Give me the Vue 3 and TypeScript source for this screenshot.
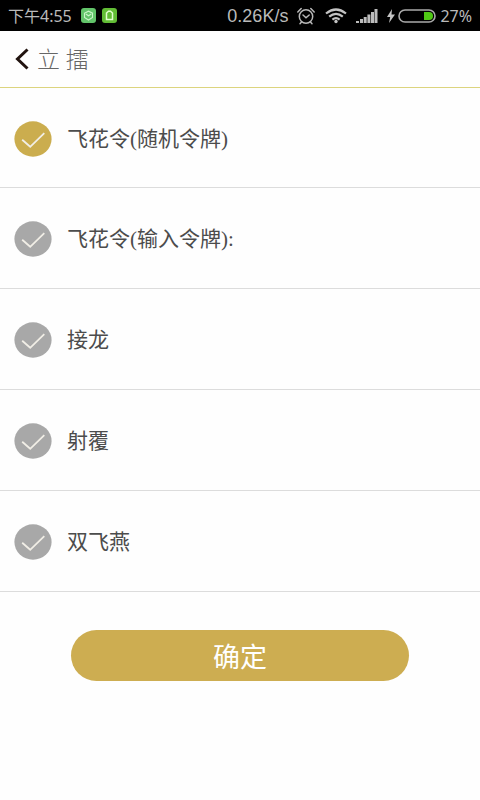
<script setup lang="ts">
import { ref } from 'vue'

interface Mode {
  id: string
  label: string
}

const modes: Mode[] = [
  { id: 'random', label: '飞花令(随机令牌)' },
  { id: 'custom', label: '飞花令(输入令牌):' },
  { id: 'chain', label: '接龙' },
  { id: 'riddle', label: '射覆' },
  { id: 'swallow', label: '双飞燕' },
]

const selected = ref<string>('random')
</script>

<template>
  <div class="screen">
    <div class="status">
      <div class="group">
        <span class="clock">下午4:55</span>
        <svg class="app" viewBox="0 0 15 15" width="15" height="15" aria-hidden="true">
          <rect width="15" height="15" rx="3" fill="#62c46a" />
          <path d="M3.5 5.2 7.5 3.2l4 2v4.2l-4 2.6-4-2.6zM4.8 6l2.7 1.8L10.2 6" fill="none" stroke="#c9f5c8" stroke-width="1.1" />
        </svg>
        <svg class="app" viewBox="0 0 15 15" width="15" height="15" aria-hidden="true">
          <rect width="15" height="15" rx="3" fill="#62bd35" />
          <path d="M4.5 11.5V5l2-1.8h2L10.500 5v6.500z" fill="none" stroke="#e2ffd0" stroke-width="1.5" />
        </svg>
      </div>
      <div class="group">
        <span class="speed">0.26K/s</span>
        <svg class="alarm" viewBox="0 0 20 18" width="20" height="18" fill="none" stroke="#b8b8b8" stroke-width="1.5" stroke-linecap="round" aria-hidden="true">
          <circle cx="10" cy="9.500" r="6.700" />
          <path d="M1.800 5 5.200 1.500M18.200 5l-3.400-3.500M7 8l3 2.700L13.200 8M5.500 15l-1.500 1.700M14.500 15l1.500 1.700" />
        </svg>
        <svg class="wifi" viewBox="0 0 22 16" width="22" height="16" fill="none" stroke="#c4c4c4" stroke-width="2.200" aria-hidden="true">
          <path d="M1 5.500Q11-2.500 21 5.500M4.200 8.700Q11 3 17.800 8.700M7.400 11.700Q11 8.700 14.600 11.700" />
          <circle cx="11" cy="13.500" r="1.700" fill="#c4c4c4" stroke="none" />
        </svg>
        <svg class="signal" viewBox="0 0 22 14" width="22" height="14" fill="#bcbcbc" aria-hidden="true">
          <path d="M0 12h3v2H0zM4 10h3v4H4zM7.700 8h3v6h-3zM11.400 5.500h3V14h-3zM15 3h3v11h-3zM18.500 0h3v14h-3z" />
        </svg>
        <svg class="bolt" viewBox="0 0 8 14" width="8" height="14" fill="#c4c4c4" aria-hidden="true">
          <path d="M5 0 0 8h3.200L2 14l6-8.500H4.500z" />
        </svg>
        <svg class="battery" viewBox="0 0 38 14" width="38" height="14" aria-hidden="true">
          <rect x="1" y="1" width="36" height="12" rx="6" fill="none" stroke="#aaa" stroke-width="1.600" />
          <path d="M26 3h5a4 4 0 0 1 0 8h-5z" fill="#4fc814" />
        </svg>
        <span class="percent">27%</span>
      </div>
    </div>

    <header class="header">
      <button class="back" type="button" aria-label="返回">
        <svg viewBox="0 0 14 22" width="14" height="22" fill="none" stroke="#21130f" stroke-width="3" aria-hidden="true">
          <path d="M12.500 1.500 2.500 11l10 9.500" />
        </svg>
      </button>
      <h1 class="title">立 擂</h1>
    </header>

    <form @submit.prevent>
      <div class="modes" role="radiogroup">
        <label v-for="mode in modes" :key="mode.id" class="row" :for="mode.id">
          <input :id="mode.id" v-model="selected" class="radio" type="radio" name="mode" :value="mode.id" />
          <svg class="mark" viewBox="0 0 38 36" width="38" height="36" aria-hidden="true">
            <ellipse class="disc" cx="19" cy="18" rx="18.600" ry="17.700" />
            <path d="M8.200 18.800 16.200 25.800 30.300 12.200" fill="none" stroke="#f1eee6" stroke-width="1.800" />
          </svg>
          <span class="label">{{ mode.label }}</span>
        </label>
      </div>
      <div class="actions">
        <button class="confirm" type="submit">确定</button>
      </div>
    </form>
  </div>
</template>

<style>
body {
  margin: 0;
  background: #fefefe;
}
</style>

<style scoped>
.screen {
  font-family: "Liberation Serif", "Noto Sans CJK SC", serif;
  color: #4c4c4c;
}
.status {
  display: flex;
  justify-content: space-between;
  align-items: center;
  height: 31px;
  padding: 0 8px;
  background: #000;
  color: #bababa;
  font-family: "Noto Sans", "Noto Sans CJK SC", sans-serif;
  font-size: 16px;
  line-height: 24px;
}
.group {
  display: flex;
  align-items: center;
}
.clock {
  margin-right: 9px;
}
.app {
  margin-right: 6px;
}
.speed {
  font-family: "Liberation Sans", sans-serif;
  font-size: 18px;
  margin-right: 8px;
}
.alarm {
  margin-right: 9px;
}
.wifi {
  margin-right: 9px;
}
.signal {
  margin-right: 9px;
}
.bolt {
  margin-right: 3px;
}
.battery {
  margin-right: 4px;
}
.header {
  display: flex;
  align-items: center;
  box-sizing: border-box;
  height: 57px;
  padding: 0 15px;
  gap: 8px;
  border-bottom: 1px solid #dcd47e;
}
.back {
  display: flex;
  padding: 0;
  border: 0;
  background: none;
  cursor: pointer;
}
.title {
  margin: 0;
  padding-top: 4px;
  color: #666;
  font-size: 23px;
  font-weight: 300;
  line-height: 32px;
}
.row {
  position: relative;
  display: flex;
  align-items: center;
  box-sizing: border-box;
  height: 101px;
  padding: 2px 14px 0;
  gap: 15px;
  border-bottom: 1px solid #dcdcdc;
  cursor: pointer;
}
.row:first-child {
  height: 100px;
}
.radio {
  position: absolute;
  width: 38px;
  height: 36px;
  margin: 0;
  opacity: 0;
}
.disc {
  fill: #a8a8a8;
}
.radio:checked + .mark .disc {
  fill: #cbad4e;
}
.radio:focus-visible + .mark {
  outline: 2px solid #cbad4e;
}
.label {
  font-size: 21px;
  line-height: 32px;
}
.actions {
  padding: 38px 71px;
}
.confirm {
  display: block;
  width: 100%;
  height: 51px;
  padding: 0;
  border: 0;
  border-radius: 26px;
  background: #cdad51;
  color: #fff;
  font-family: "Noto Sans CJK SC", sans-serif;
  font-size: 27px;
  line-height: 51px;
  cursor: pointer;
}
</style>
